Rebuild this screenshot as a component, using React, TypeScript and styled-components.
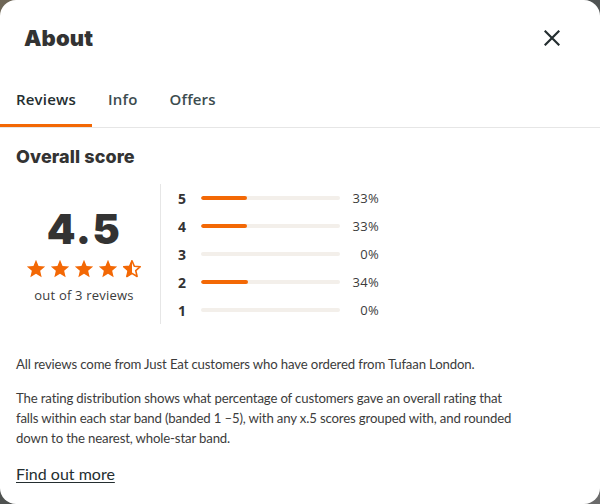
import styled, { createGlobalStyle } from "styled-components";

const GlobalStyle = createGlobalStyle`
  html, body {
    margin: 0;
    padding: 0;
  }
  body {
    font-family: Lato, "Noto Sans", sans-serif;
    color: #242e30;
  }
  * {
    box-sizing: border-box;
  }
`;

const Backdrop = styled.div`
  width: 600px;
  height: 504px;
  background: linear-gradient(135deg, #6e6656 0%, #4c5050 50%, #6b6b6b 100%);
`;

const Modal = styled.div`
  width: 100%;
  height: 100%;
  background: #ffffff;
  border-radius: 16px;
  overflow: hidden;
  display: flex;
  flex-direction: column;
`;

const Header = styled.div`
  height: 76px;
  padding: 0 24px;
  display: flex;
  align-items: center;
  justify-content: space-between;
`;

const Title = styled.h1`
  margin: 0;
  font-family: Inter, sans-serif;
  font-weight: 900;
  font-size: 22px;
  letter-spacing: 0.1px;
  color: #333333;
`;

const CloseButton = styled.button`
  border: 0;
  background: none;
  padding: 0;
  margin-right: 16px;
  width: 16px;
  height: 16px;
  display: flex;
  cursor: pointer;
`;

const Tabs = styled.div`
  display: flex;
  height: 52px;
  border-bottom: 1px solid #e6e6e6;
`;

const Tab = styled.div<{ $active?: boolean }>`
  height: 51px;
  padding: 0 16px 3px;
  display: flex;
  align-items: center;
  font-family: "Open Sans", sans-serif;
  font-weight: 600;
  font-size: 15px;
  letter-spacing: 0.2px;
  color: ${(p) => (p.$active ? "#242e30" : "#3c4c4f")};
  border-bottom: 3px solid ${(p) => (p.$active ? "#f36805" : "transparent")};
  border-radius: ${(p) => (p.$active ? "2px 2px 0 0" : "0")};
`;

const Content = styled.div`
  padding: 16px 16px 0;
`;

const SectionTitle = styled.h2`
  margin: 0;
  font-family: Inter, sans-serif;
  font-weight: 800;
  font-size: 18px;
  line-height: 25px;
  letter-spacing: 0.1px;
  color: #333333;
`;

const ScoreSection = styled.div`
  margin-top: 15px;
  display: flex;
  height: 140px;
`;

const Summary = styled.div`
  width: 136px;
  margin-right: 8px;
  padding-top: 4px;
  display: flex;
  flex-direction: column;
  align-items: center;
  justify-content: center;
`;

const BigScore = styled.div`
  font-family: Inter, sans-serif;
  font-weight: 900;
  font-size: 41px;
  line-height: 42px;
  color: #333333;
  letter-spacing: 1.5px;
`;

const Stars = styled.div`
  margin-top: 8px;
  display: flex;
  gap: 2px;
`;

const ReviewCount = styled.div`
  margin-top: 5px;
  font-family: "Open Sans", sans-serif;
  font-size: 13px;
  line-height: 20px;
  letter-spacing: 0.2px;
  color: #3c3c3c;
`;

const Distribution = styled.div`
  border-left: 1px solid #e6e6e6;
  padding-left: 17px;
  display: flex;
  flex-direction: column;
`;

const Row = styled.div`
  height: 28px;
  display: flex;
  align-items: center;
`;

const StarLabel = styled.span`
  width: 23px;
  font-family: "Open Sans", sans-serif;
  font-weight: 700;
  font-size: 14px;
  color: #333333;
`;

const Track = styled.div`
  width: 139px;
  height: 4px;
  border-radius: 2px;
  background: #f3efea;
  overflow: hidden;
`;

const Fill = styled.div`
  height: 100%;
  border-radius: 2px;
  background: #f36805;
`;

const Percent = styled.span`
  width: 39px;
  text-align: right;
  font-family: "Open Sans", sans-serif;
  font-size: 13px;
  color: #3c3c3c;
  letter-spacing: 0.3px;
`;

const Paragraph = styled.p<{ $gap: number }>`
  max-width: 500px;
  margin: ${(p) => p.$gap}px 0 0;
  font-family: Lato, sans-serif;
  font-size: 13.2px;
  letter-spacing: -0.15px;
  line-height: 20px;
  color: #3c3c3c;
`;

const MoreLink = styled.a`
  display: inline-block;
  margin-top: 14px;
  font-family: Lato, sans-serif;
  font-size: 16px;
  line-height: 24px;
  color: #242e30;
  text-decoration: underline;
  text-underline-offset: 2px;
`;

const STAR =
  "M12 17.27L18.18 21l-1.64-7.03L22 9.24l-7.19-.61L12 2 9.19 8.63 2 9.24l5.46 4.73L5.82 21z";

const Star = ({ half }: { half?: boolean }) => (
  <svg width="22" height="22" viewBox="0 0 24 24">
    {half ? (
      <>
        <defs>
          <clipPath id="halfStar">
            <rect x="0" y="0" width="12" height="24" />
          </clipPath>
        </defs>
        <path
          d={STAR}
          fill="none"
          stroke="#f36805"
          strokeWidth="2"
          strokeLinejoin="round"
          transform="translate(1.2 1.2) scale(0.9)"
        />
        <path d={STAR} fill="#f36805" clipPath="url(#halfStar)" />
      </>
    ) : (
      <path d={STAR} fill="#f36805" />
    )}
  </svg>
);

const ratings = [
  { stars: 5, pct: 33 },
  { stars: 4, pct: 33 },
  { stars: 3, pct: 0 },
  { stars: 2, pct: 34 },
  { stars: 1, pct: 0 },
];

export default function App() {
  return (
    <>
      <GlobalStyle />
      <Backdrop>
        <Modal>
          <Header>
            <Title>About</Title>
            <CloseButton aria-label="Close">
              <svg width="16" height="16" viewBox="0 0 16 16">
                <path
                  d="M1.5 1.5L14.5 14.5M14.5 1.5L1.5 14.5"
                  stroke="#242e30"
                  strokeWidth="2.2"
                  strokeLinecap="square"
                />
              </svg>
            </CloseButton>
          </Header>
          <Tabs>
            <Tab $active>Reviews</Tab>
            <Tab>Info</Tab>
            <Tab>Offers</Tab>
          </Tabs>
          <Content>
            <SectionTitle>Overall score</SectionTitle>
            <ScoreSection>
              <Summary>
                <BigScore>4.5</BigScore>
                <Stars>
                  <Star />
                  <Star />
                  <Star />
                  <Star />
                  <Star half />
                </Stars>
                <ReviewCount>out of 3 reviews</ReviewCount>
              </Summary>
              <Distribution>
                {ratings.map((r) => (
                  <Row key={r.stars}>
                    <StarLabel>{r.stars}</StarLabel>
                    <Track>
                      <Fill style={{ width: `${r.pct}%` }} />
                    </Track>
                    <Percent>{r.pct}%</Percent>
                  </Row>
                ))}
              </Distribution>
            </ScoreSection>
            <Paragraph $gap={30}>
              All reviews come from Just Eat customers who have ordered from
              Tufaan London.
            </Paragraph>
            <Paragraph $gap={14}>
              The rating distribution shows what percentage of customers gave an
              overall rating that falls within each star band (banded 1 –5), with
              any x.5 scores grouped with, and rounded down to the nearest,
              whole-star band.
            </Paragraph>
            <MoreLink href="#">Find out more</MoreLink>
          </Content>
        </Modal>
      </Backdrop>
    </>
  );
}
